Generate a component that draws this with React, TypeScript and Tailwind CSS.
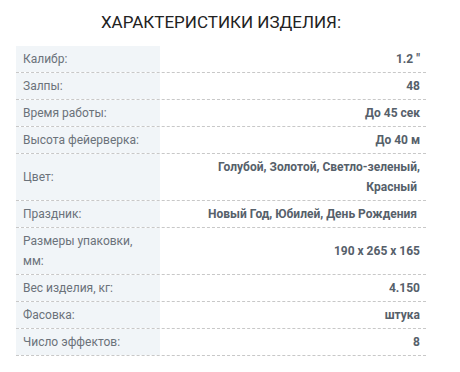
import React from "react";

const rows: { label: React.ReactNode; value: React.ReactNode }[] = [
  { label: "Калибр:", value: "1.2 \"" },
  { label: "Залпы:", value: "48 " },
  { label: "Время работы:", value: "До 45 сек" },
  { label: "Высота фейерверка:", value: "До 40 м" },
  {
    label: "Цвет:",
    value: (
      <>
        Голубой, Золотой, Светло-зеленый,
        <br />
        Красный&nbsp;
      </>
    ),
  },
  { label: "Праздник:", value: <>Новый Год, Юбилей, День Рождения&nbsp;</> },
  {
    label: (
      <>
        Размеры упаковки,
        <br />
        мм:
      </>
    ),
    value: "190 x 265 x 165",
  },
  { label: "Вес изделия, кг:", value: "4.150" },
  { label: "Фасовка:", value: "штука" },
  { label: "Число эффектов:", value: "8" },
];

export default function App() {
  return (
    <div
      className="w-[460px] h-[372px] bg-white"
      style={{ fontFamily: "Roboto, 'Liberation Sans', sans-serif" }}
    >
      <div className="ml-4 w-[410px]">
        <h2 className="pt-[11px] text-center text-[17px] leading-[22px] font-normal text-[#222]">
          ХАРАКТЕРИСТИКИ ИЗДЕЛИЯ:
        </h2>
        <div className="mt-[13px]">
          {rows.map((r, i) => (
            <div key={i} className="flex border-b border-dashed border-[#c8c8c8]">
              <div className="w-[144px] shrink-0 bg-[#f1f5f8] pl-[7px] py-[3px] text-[12px] leading-[20px] text-[#6b727a] flex items-center">
                <span>{r.label}</span>
              </div>
              <div className="flex-1 pr-[6px] py-[3px] text-[12px] leading-[20px] font-bold text-[#56606a] text-right flex items-center justify-end">
                <span>{r.value}</span>
              </div>
            </div>
          ))}
        </div>
      </div>
    </div>
  );
}
